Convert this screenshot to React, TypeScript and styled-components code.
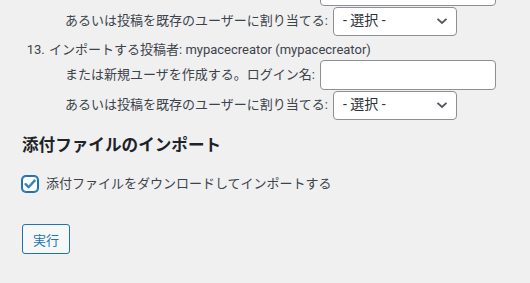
import styled, { createGlobalStyle } from "styled-components";

const GlobalStyle = createGlobalStyle`
  html, body {
    margin: 0;
    padding: 0;
    background: #f0f0f1;
  }
  body {
    color: #3c434a;
    font-family: Roboto, "Noto Sans CJK JP", sans-serif;
    font-size: 13px;
    line-height: 1.4;
    overflow: hidden;
  }
`;

type Author = { name: string; login: string; continued?: boolean };

// the page is scrolled: item 12 shows only the bottom of its rows
const authors: Author[] = [
  { name: "mypace", login: "mypace", continued: true },
  { name: "mypacecreator", login: "mypacecreator" },
];

export default function App() {
  return (
    <>
      <GlobalStyle />
      <Wrap>
        <AuthorList start={12}>
          {authors.map((a) => (
            <AuthorItem key={a.login} $continued={a.continued}>
              {!a.continued && (
                <AuthorHead>
                  インポートする投稿者: {a.name} ({a.login})
                </AuthorHead>
              )}
              <SubRows>
                <Row>
                  {!a.continued && <span>または新規ユーザを作成する。ログイン名:</span>}
                  <TextInput $offset={a.continued} />
                </Row>
                <Row>
                  <span>あるいは投稿を既存のユーザーに割り当てる:</span>
                  <Select>
                    <span>- 選択 -</span>
                    <svg width="12" height="8" viewBox="0 0 12 8">
                      <path
                        d="M1.5 1.8 L6 6 L10.5 1.8"
                        fill="none"
                        stroke="#50575e"
                        strokeWidth="1.8"
                      />
                    </svg>
                  </Select>
                </Row>
              </SubRows>
            </AuthorItem>
          ))}
        </AuthorList>

        <Heading>添付ファイルのインポート</Heading>

        <CheckRow>
          <CheckBox>
            <svg width="14" height="14" viewBox="0 0 14 14">
              <path
                d="M2.6 7.2 L5.6 10.2 L11.6 3.6"
                fill="none"
                stroke="#3582c4"
                strokeWidth="2.4"
                strokeLinecap="round"
                strokeLinejoin="round"
              />
            </svg>
          </CheckBox>
          <span>添付ファイルをダウンロードしてインポートする</span>
        </CheckRow>

        <Button>実行</Button>
      </Wrap>
    </>
  );
}

const Wrap = styled.div`
  margin-top: -24px;
  padding-left: 22px;
`;

const AuthorList = styled.ol`
  margin: 0;
  padding-left: 26px;
`;

const AuthorItem = styled.li<{ $continued?: boolean }>`
  margin-bottom: 4px;
  list-style: ${(p) => (p.$continued ? "none" : "decimal")};
  &::marker {
    font-family: Roboto, sans-serif;
  }
`;

const AuthorHead = styled.div`
  height: 20px;
  line-height: 20px;
  padding-left: 1px;
`;

const SubRows = styled.div`
  margin-left: 17px;
  display: flex;
  flex-direction: column;
`;

const Row = styled.div`
  display: flex;
  align-items: center;
  gap: 5px;
  height: 30px;
`;

const TextInput = styled.div<{ $offset?: boolean }>`
  box-sizing: border-box;
  width: 176px;
  height: 30px;
  margin-left: ${(p) => (p.$offset ? "255px" : "0")};
  background: #fff;
  border: 1px solid #8c8f94;
  border-radius: 4px;
`;

const Select = styled.div`
  box-sizing: border-box;
  width: 124px;
  height: 29px;
  background: #fff;
  border: 1px solid #8c8f94;
  border-radius: 4px;
  display: flex;
  align-items: center;
  justify-content: space-between;
  padding: 0 8px 0 9px;
  font-size: 14px;
  color: #2c3338;
`;

const Heading = styled.h3`
  margin: 14px 0 0;
  height: 24px;
  line-height: 24px;
  font-size: 16.6px;
  font-weight: 700;
  color: #1d2327;
`;

const CheckRow = styled.label`
  display: flex;
  align-items: center;
  gap: 8px;
  margin-top: 16px;
  height: 20px;
`;

const CheckBox = styled.span`
  box-sizing: border-box;
  width: 16px;
  height: 16px;
  border: 1px solid #2271b1;
  box-shadow: 0 0 0 1px #2271b1;
  border-radius: 4px;
  background: #fff;
  display: flex;
  align-items: center;
  justify-content: center;
`;

const Button = styled.button`
  display: block;
  margin-top: 30px;
  box-sizing: border-box;
  width: 48px;
  height: 30px;
  padding: 0;
  background: #f6f7f7;
  border: 1px solid #2271b1;
  border-radius: 3px;
  color: #2271b1;
  font-family: Roboto, "Noto Sans CJK JP", sans-serif;
  font-size: 13px;
`;
